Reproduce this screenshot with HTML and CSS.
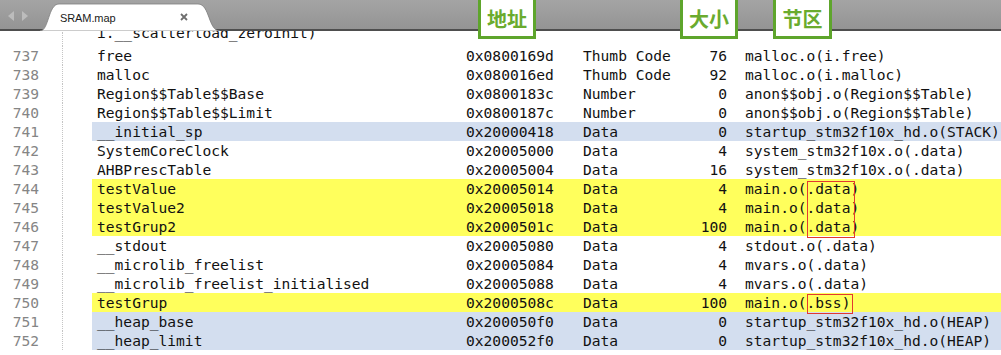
FILE: index.html
```html
<!DOCTYPE html>
<html>
<head>
<meta charset="utf-8">
<link rel="stylesheet" href="styles.css">
</head>
<body>
<div class="window">
  <div class="tabbar">
    <div class="nav">
      <svg width="24" height="10" viewBox="0 0 24 10"><path d="M7 0 L1 5 L7 10 Z" fill="#bcbcbc"/><path d="M15 0 L21 5 L15 10 Z" fill="#bcbcbc"/></svg>
    </div>
    <div class="tab">
      <svg class="tab-shape" width="180" height="28" viewBox="0 0 180 28"><path d="M0 28 C9 28 8 1 19 1 L158 1 C170 1 168 28 180 28 Z" fill="#fff" stroke="#7d7d7d" stroke-width="0.8"/></svg>
      <span class="tab-title">SRAM.map</span>
      <svg class="tab-close" width="8" height="8" viewBox="0 0 8 8"><path d="M1 1 L7 7 M7 1 L1 7" stroke="#6e6e6e" stroke-width="1.8"/></svg>
    </div>
  </div>

  <div class="tag tag-addr">地址</div>
  <div class="tag tag-size">大小</div>
  <div class="tag tag-sect">节区</div>

  <div class="editor">
    <div class="rows">
      <div class="row wrapped"><span class="ln"></span><div class="code"><span class="c-name">i.__scatterload_zeroinit)</span></div></div>
      <div class="row"><span class="ln">737</span><div class="code"><span class="c-name">free</span><span class="c-addr">0x0800169d</span><span class="c-type">Thumb Code</span><span class="c-size">76</span><span class="c-sect">malloc.o(i.free)</span></div></div>
      <div class="row"><span class="ln">738</span><div class="code"><span class="c-name">malloc</span><span class="c-addr">0x080016ed</span><span class="c-type">Thumb Code</span><span class="c-size">92</span><span class="c-sect">malloc.o(i.malloc)</span></div></div>
      <div class="row"><span class="ln">739</span><div class="code"><span class="c-name">Region$$Table$$Base</span><span class="c-addr">0x0800183c</span><span class="c-type">Number</span><span class="c-size">0</span><span class="c-sect">anon$$obj.o(Region$$Table)</span></div></div>
      <div class="row"><span class="ln">740</span><div class="code"><span class="c-name">Region$$Table$$Limit</span><span class="c-addr">0x0800187c</span><span class="c-type">Number</span><span class="c-size">0</span><span class="c-sect">anon$$obj.o(Region$$Table)</span></div></div>
      <div class="row"><span class="ln">741</span><div class="code blue"><span class="c-name">__initial_sp</span><span class="c-addr">0x20000418</span><span class="c-type">Data</span><span class="c-size">0</span><span class="c-sect">startup_stm32f10x_hd.o(STACK)</span></div></div>
      <div class="row"><span class="ln">742</span><div class="code"><span class="c-name">SystemCoreClock</span><span class="c-addr">0x20005000</span><span class="c-type">Data</span><span class="c-size">4</span><span class="c-sect">system_stm32f10x.o(.data)</span></div></div>
      <div class="row"><span class="ln">743</span><div class="code"><span class="c-name">AHBPrescTable</span><span class="c-addr">0x20005004</span><span class="c-type">Data</span><span class="c-size">16</span><span class="c-sect">system_stm32f10x.o(.data)</span></div></div>
      <div class="row"><span class="ln">744</span><div class="code yellow"><span class="c-name">testValue</span><span class="c-addr">0x20005014</span><span class="c-type">Data</span><span class="c-size">4</span><span class="c-sect">main.o(.data)</span></div></div>
      <div class="row"><span class="ln">745</span><div class="code yellow"><span class="c-name">testValue2</span><span class="c-addr">0x20005018</span><span class="c-type">Data</span><span class="c-size">4</span><span class="c-sect">main.o(.data)</span></div></div>
      <div class="row"><span class="ln">746</span><div class="code yellow"><span class="c-name">testGrup2</span><span class="c-addr">0x2000501c</span><span class="c-type">Data</span><span class="c-size">100</span><span class="c-sect">main.o(.data)</span></div></div>
      <div class="row"><span class="ln">747</span><div class="code"><span class="c-name">__stdout</span><span class="c-addr">0x20005080</span><span class="c-type">Data</span><span class="c-size">4</span><span class="c-sect">stdout.o(.data)</span></div></div>
      <div class="row"><span class="ln">748</span><div class="code"><span class="c-name">__microlib_freelist</span><span class="c-addr">0x20005084</span><span class="c-type">Data</span><span class="c-size">4</span><span class="c-sect">mvars.o(.data)</span></div></div>
      <div class="row"><span class="ln">749</span><div class="code"><span class="c-name">__microlib_freelist_initialised</span><span class="c-addr">0x20005088</span><span class="c-type">Data</span><span class="c-size">4</span><span class="c-sect">mvars.o(.data)</span></div></div>
      <div class="row"><span class="ln">750</span><div class="code yellow"><span class="c-name">testGrup</span><span class="c-addr">0x2000508c</span><span class="c-type">Data</span><span class="c-size">100</span><span class="c-sect">main.o(.bss)</span></div></div>
      <div class="row"><span class="ln">751</span><div class="code blue"><span class="c-name">__heap_base</span><span class="c-addr">0x200050f0</span><span class="c-type">Data</span><span class="c-size">0</span><span class="c-sect">startup_stm32f10x_hd.o(HEAP)</span></div></div>
      <div class="row"><span class="ln">752</span><div class="code blue"><span class="c-name">__heap_limit</span><span class="c-addr">0x200052f0</span><span class="c-type">Data</span><span class="c-size">0</span><span class="c-sect">startup_stm32f10x_hd.o(HEAP)</span></div></div>
    </div>
    <div class="mark mark-data"></div>
    <div class="mark mark-bss"></div>
  </div>
</div>
</body>
</html>
```

FILE: styles.css
```css
html, body {
  margin: 0;
  padding: 0;
}
body {
  width: 1001px;
  height: 355px;
  overflow: hidden;
  background: #fff;
  font-family: "DejaVu Sans Mono", "Liberation Mono", monospace;
}
.window {
  position: relative;
  width: 1001px;
  height: 355px;
  overflow: hidden;
}

/* tab bar */
.tabbar {
  height: 29px;
  background: linear-gradient(#a4a4a4, #949494);
  border-bottom: 2px solid #4e4e4e;
  display: flex;
  align-items: flex-end;
  position: relative;
  z-index: 1;
}
.nav {
  align-self: center;
  padding-left: 7px;
  width: 33px;
  height: 10px;
  margin-top: 2px;
}
.nav svg { display: block; }
.tab {
  position: relative;
  width: 180px;
  height: 28px;
  margin-bottom: -2px;
  display: flex;
  align-items: center;
}
.tab-shape {
  position: absolute;
  left: 0;
  top: 0;
}
.tab-title {
  position: relative;
  margin-left: 20px;
  margin-top: 1px;
  font-family: "Liberation Sans", Arial, sans-serif;
  font-size: 11px;
  color: #1a1a1a;
  letter-spacing: -0.1px;
}
.tab-close {
  position: relative;
  margin-left: 65px;
}

/* annotation tags */
.tag {
  position: absolute;
  top: -3px;
  height: 36px;
  border: 3px solid #5ea52c;
  background: #fff;
  color: #6aab2e;
  font-family: "Noto Sans CJK SC", sans-serif;
  font-weight: 700;
  font-size: 20px;
  line-height: 38px;
  text-align: center;
  z-index: 2;
  box-sizing: content-box;
}
.tag-addr { left: 478px; width: 52px; }
.tag-size { left: 680px; width: 52px; }
.tag-sect { left: 773px; width: 53px; }

/* editor */
.editor {
  position: relative;
  height: 324px;
  overflow: hidden;
}
.rows {
  margin-top: 1px;
}
.row {
  display: flex;
  height: 19px;
  line-height: 19px;
  font-size: 14.6px;
  color: #111;
  white-space: pre;
}
.row.wrapped {
  height: 14px;
  line-height: 1px;
}
.ln {
  width: 39px;
  padding-right: 23px;
  text-align: right;
  color: #858585;
  border-right: 1px dotted #c4c4c4;
  flex: none;
}
.code {
  margin-left: 29px;
  padding-left: 5px;
  flex: 1;
  display: flex;
}
.code.yellow { background: #ffff5c; }
.code.blue { background: #d3deef; }

.c-name { width: 369px; flex: none; }
.c-addr { width: 117px; flex: none; }
.c-type { width: 100px; flex: none; }
.c-size { width: 44px; flex: none; text-align: right; }
.c-sect { margin-left: 18px; flex: none; }

.mark {
  position: absolute;
  border: 1px solid #e2392f;
  box-sizing: border-box;
}
.mark-data { left: 807px; top: 150px; width: 48px; height: 57px; }
.mark-bss { left: 807px; top: 263px; width: 46px; height: 20px; }
```
